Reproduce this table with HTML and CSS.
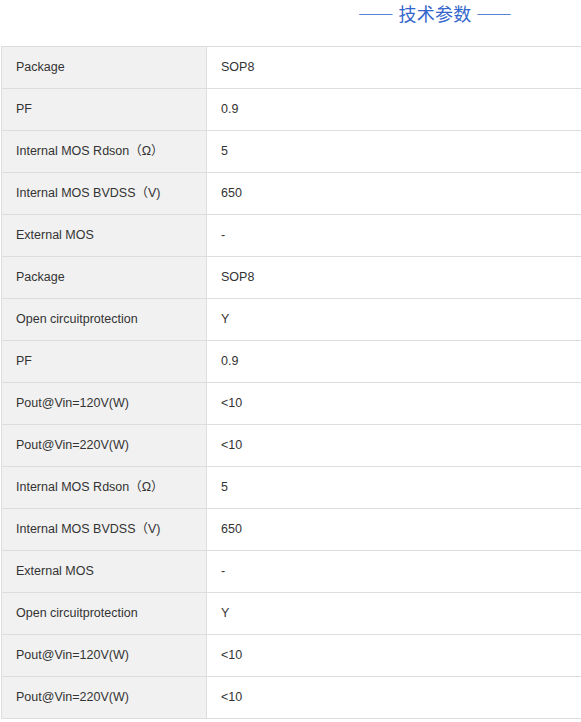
FILE: index.html
```html
<!DOCTYPE html>
<html lang="zh-CN">
<head>
    <meta charset="UTF-8">
    <meta name="viewport" content="width=device-width, initial-scale=1.0">
    <title>技术参数</title>
    <link rel="stylesheet" href="styles.css">
</head>
<body>
    <div class="spec-wrap">
        <h2 class="spec-title">—— 技术参数 ——</h2>
        <div class="table-box">
            <table class="spec-table">
                <tr><td class="name">Package</td><td>SOP8</td></tr>
                <tr><td class="name">PF</td><td>0.9</td></tr>
                <tr><td class="name">Internal MOS Rdson（Ω）</td><td>5</td></tr>
                <tr><td class="name">Internal MOS BVDSS（V)</td><td>650</td></tr>
                <tr><td class="name">External MOS</td><td>-</td></tr>
                <tr><td class="name">Package</td><td>SOP8</td></tr>
                <tr><td class="name">Open circuitprotection</td><td>Y</td></tr>
                <tr><td class="name">PF</td><td>0.9</td></tr>
                <tr><td class="name">Pout@Vin=120V(W)</td><td>&lt;10</td></tr>
                <tr><td class="name">Pout@Vin=220V(W)</td><td>&lt;10</td></tr>
                <tr><td class="name">Internal MOS Rdson（Ω）</td><td>5</td></tr>
                <tr><td class="name">Internal MOS BVDSS（V)</td><td>650</td></tr>
                <tr><td class="name">External MOS</td><td>-</td></tr>
                <tr><td class="name">Open circuitprotection</td><td>Y</td></tr>
                <tr><td class="name">Pout@Vin=120V(W)</td><td>&lt;10</td></tr>
                <tr><td class="name">Pout@Vin=220V(W)</td><td>&lt;10</td></tr>
            </table>
        </div>
    </div>
</body>
</html>
```

FILE: styles.css
```css
body {
    margin: 0;
    padding: 0;
    font-family: "Liberation Sans", Arial, "Noto Sans CJK SC", sans-serif;
    color: #333;
    background-color: white;
}
.spec-wrap {
    overflow: hidden;
}
.spec-title {
    margin: 0;
    height: 46px;
    padding: 0 0 0 289px;
    box-sizing: border-box;
    text-align: center;
    font-size: 18px;
    font-weight: normal;
    line-height: 26px;
    letter-spacing: 0.3px;
    color: #3366cc;
    font-family: "Noto Sans CJK SC", sans-serif;
}
.table-box {
    padding-left: 1px;
    width: 620px;
}
.spec-table {
    width: 100%;
    border-collapse: collapse;
    font-size: 12.5px;
    line-height: 16px;
}
.spec-table td {
    height: 39px;
    padding: 0 0 2px 14px;
    border: 1px solid #ddd;
}
.spec-table td.name {
    width: 190px;
    background-color: #f1f1f1;
}
```
